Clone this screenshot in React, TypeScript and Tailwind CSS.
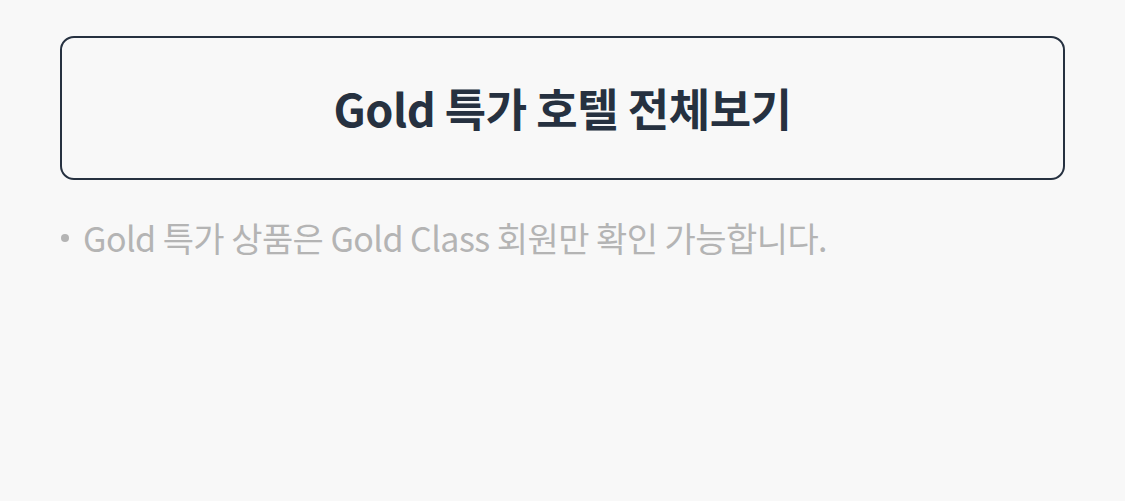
export default function App() {
  return (
    <div
      className="w-[1125px] h-[501px] bg-[#f8f8f8] px-[60px] pt-[36px]"
      style={{ fontFamily: '"Noto Sans CJK KR", "Noto Sans", sans-serif' }}
    >
      <button className="w-full h-[144px] rounded-[14px] border-[2.5px] border-[#263140] flex items-center justify-center text-[45px] font-bold text-[#263140] tracking-[-0.5px]">
        Gold 특가 호텔 전체보기
      </button>
      <div className="mt-[36px] flex items-center text-[#b4b4b4] text-[34px] tracking-[-0.55px] leading-[44px]">
        <span className="shrink-0 w-[8px] h-[8px] rounded-full bg-[#b4b4b4] mr-[14px] ml-[1px]" />
        <span>Gold 특가 상품은 Gold Class 회원만 확인 가능합니다.</span>
      </div>
    </div>
  );
}
